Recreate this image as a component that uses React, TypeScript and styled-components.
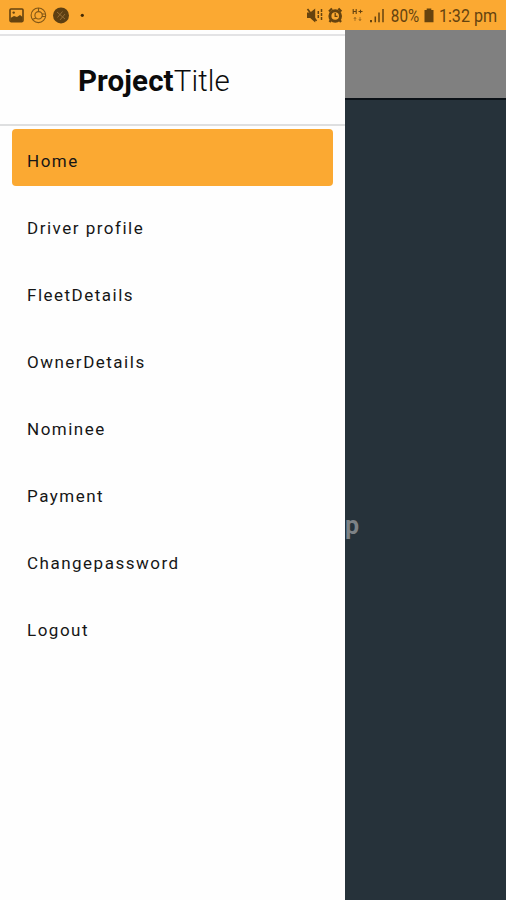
import React from "react";
import styled, { createGlobalStyle } from "styled-components";

const GlobalStyle = createGlobalStyle`
  * { box-sizing: border-box; }
  body { margin: 0; background: #26323a; font-family: Roboto, "Liberation Sans", sans-serif; overflow: hidden; }
`;

const Screen = styled.div`
  display: flex;
  flex-direction: column;
  width: 506px;
  height: 900px;
`;

const StatusBar = styled.header`
  display: flex;
  justify-content: space-between;
  flex: none;
  height: 30px;
  background: #fba932;
  color: #65430f;
`;

const StatusIcons = styled.svg`
  display: block;
  flex: none;
  height: 30px;
`;

const StatusGroup = styled.div`
  display: flex;
  width: 206px;
`;

const StatusText = styled.span<{ $width: number; $squeeze: number }>`
  flex: none;
  width: ${(p) => p.$width}px;
  padding: 1px 0 0 1px;
  font-size: 17.5px;
  line-height: 31px;
  white-space: nowrap;
  transform: scaleX(${(p) => p.$squeeze});
  transform-origin: left center;
`;

const Body = styled.div`
  display: flex;
  flex: 1;
  min-height: 0;
`;

const Drawer = styled.nav`
  flex: none;
  width: 345px;
  padding-top: 4px;
  background: #fefefe;
`;

const Brand = styled.h1`
  height: 92px;
  margin: 0;
  padding: 28px 0 0 78px;
  border-top: 2px solid #e3e3e5;
  border-bottom: 2px solid #dedfe0;
  color: #0b0b0b;
  font-size: 29.5px;
  font-weight: 300;
  line-height: 34px;
  letter-spacing: 0.1px;

  b { font-weight: 700; }
`;

const Menu = styled.ul`
  display: flex;
  flex-direction: column;
  gap: 10px;
  margin: 0;
  padding: 3px 12px 0;
  list-style: none;
`;

const MenuItem = styled.li<{ $active?: boolean }>`
  height: 57px;
  padding: 20px 0 0 15px;
  border-radius: 4px;
  background: ${(p) => (p.$active ? "#fba932" : "transparent")};
  color: #161616;
  font-size: 17px;
  line-height: 24px;
  letter-spacing: 1.5px;
`;

const Page = styled.main`
  display: flex;
  flex: 1;
  flex-direction: column;
  min-width: 0;
  background: #26323a;
`;

const PageHeader = styled.div`
  height: 70px;
  flex: none;
  background: #808080;
  border-bottom: 2px solid #0b1117;
`;

const PageText = styled.p`
  margin: 411px 0 0;
  color: #7d8286;
  font-size: 25px;
  font-weight: 700;
  line-height: 30px;
`;

const items = [
  "Home",
  "Driver profile",
  "FleetDetails",
  "OwnerDetails",
  "Nominee",
  "Payment",
  "Changepassword",
  "Logout",
];

const NotificationIcons = () => (
  <StatusIcons width="100" viewBox="0 0 100 30" fill="none" stroke="currentColor">
    <rect x="10" y="9" width="13" height="12.6" rx="1" strokeWidth="1.6" />
    <path d="M10.5 20v-2l3.5-2 3 1 3-2 2.5 2v4h-12z" fill="currentColor" stroke="none" />
    <circle cx="13.7" cy="12.6" r="1.2" fill="currentColor" stroke="none" />
    <g strokeWidth="1.1" opacity="0.8">
      <circle cx="38.4" cy="15.3" r="7.3" />
      <circle cx="38.6" cy="15.3" r="3.7" />
      <path d="M38.5 8v3.5M41.8 14h4M41.8 16.5h4M36 18l-4 1.5" />
    </g>
    <circle cx="61" cy="15.4" r="8" fill="#5d3f12" stroke="none" />
    <path d="m57 12 8 7M57.5 17.5l5-6M60 20l5-6" stroke="#987039" strokeWidth="0.9" />
    <circle cx="82.3" cy="15.3" r="1.6" fill="#442b06" stroke="none" />
  </StatusIcons>
);

const SystemIcons = () => (
  <StatusIcons width="90" viewBox="300 0 90 30" fill="none" stroke="currentColor">
    <path d="M307 12.5h3.2l5-4v14l-5-4.5H307z" fill="currentColor" stroke="none" />
    <path d="m307.5 9 9 12" strokeWidth="1.7" />
    <path d="M318.3 11v8M321.5 9v12" strokeWidth="1.5" strokeDasharray="3 1" />
    <circle cx="335.2" cy="16" r="5.3" strokeWidth="3" />
    <path d="m329 11.5 3-3M341.4 11.5l-3-3M331 20l-1.5 2M339.5 20l1.5 2" strokeWidth="2.2" />
    <path d="M335.2 13v3.3h2.3" strokeWidth="1.3" />
    <path d="M353.2 9v5M356.2 9v5M353.2 11.5h3M358.5 11.5h4M360.5 9.7v3.6" strokeWidth="1.1" />
    <path d="M355 17.5v3.5m-1.2-2 1.2-1.7 1.2 1.7M360 17v3.5m-1.2-1.5 1.2 1.7 1.2-1.7" strokeWidth="0.8" opacity="0.65" />
    <path d="M371 20v2.3" strokeWidth="2" />
    <path d="M375.3 16.5v5.8M379 12.5v9.8M383 9v13.3" strokeWidth="1.5" />
  </StatusIcons>
);

const BatteryIcon = () => (
  <StatusIcons width="17" viewBox="421 0 17 30" fill="currentColor">
    <path d="M424.5 10h2.2V8.5h4.6V10h2.2v12.3h-9z" />
  </StatusIcons>
);

export default function App() {
  return (
    <>
      <GlobalStyle />
      <Screen>
        <StatusBar>
          <NotificationIcons />
          <StatusGroup>
            <SystemIcons />
            <StatusText $width={31} $squeeze={0.87}>80%</StatusText>
            <BatteryIcon />
            <StatusText $width={67} $squeeze={0.92}>1:32 pm</StatusText>
          </StatusGroup>
        </StatusBar>
        <Body>
          <Drawer>
            <Brand><b>Project</b>Title</Brand>
            <Menu>
              {items.map((item, index) => (
                <MenuItem key={item} $active={index === 0}>{item}</MenuItem>
              ))}
            </Menu>
          </Drawer>
          <Page>
            <PageHeader />
            <PageText>p</PageText>
          </Page>
        </Body>
      </Screen>
    </>
  );
}
